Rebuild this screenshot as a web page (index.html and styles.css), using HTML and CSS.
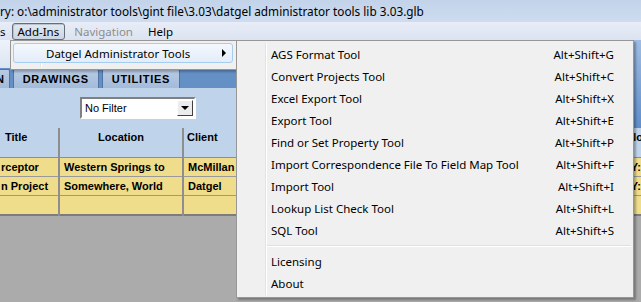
FILE: index.html
```html
<!DOCTYPE html>
<html lang="en">
<head>
  <meta charset="UTF-8" />
  <title>gINT - Add-Ins menu</title>
  <link rel="stylesheet" href="styles.css">
</head>
<body>

  <div class="titlebar">ry: o:\administrator tools\gint file\3.03\datgel administrator tools lib 3.03.glb</div>

  <div class="menubar">
    <span class="menu-item cut">s</span>
    <span class="menu-item pressed">Add-Ins</span>
    <span class="menu-item disabled">Navigation</span>
    <span class="menu-item help">Help</span>
  </div>

  <div class="upper">
    <div class="upper-main">
      <div class="toolbar"></div>
      <div class="tabs">
        <div class="tab tab-cut">N</div>
        <div class="tab">DRAWINGS</div>
        <div class="tab">UTILITIES</div>
      </div>
      <div class="filter">
        <div class="combo">
          <span class="combo-text">No Filter</span>
          <span class="combo-btn"></span>
        </div>
      </div>
    </div>
    <div class="upper-side"></div>
  </div>

  <table class="grid">
    <tr>
      <th class="col-title">Title</th>
      <th class="col-location">Location</th>
      <th class="col-client">Client</th>
      <th class="col-rest">No</th>
    </tr>
    <tr>
      <td>rceptor</td>
      <td>Western Springs to</td>
      <td>McMillan</td>
      <td class="last">Y:</td>
    </tr>
    <tr>
      <td>n Project</td>
      <td>Somewhere, World</td>
      <td>Datgel</td>
      <td class="last">Y:</td>
    </tr>
    <tr>
      <td></td>
      <td></td>
      <td></td>
      <td></td>
    </tr>
  </table>

  <!-- Add-Ins dropdown -->
  <div class="dropdown">
    <div class="dropdown-item active">
      <span>Datgel Administrator Tools</span>
      <span class="arrow"></span>
    </div>
  </div>

  <!-- Datgel Administrator Tools submenu -->
  <div class="submenu">
    <div class="sub-item"><span>AGS Format Tool</span><span class="key">Alt+Shift+G</span></div>
    <div class="sub-item"><span>Convert Projects Tool</span><span class="key">Alt+Shift+C</span></div>
    <div class="sub-item"><span>Excel Export Tool</span><span class="key">Alt+Shift+X</span></div>
    <div class="sub-item"><span>Export Tool</span><span class="key">Alt+Shift+E</span></div>
    <div class="sub-item"><span>Find or Set Property Tool</span><span class="key">Alt+Shift+P</span></div>
    <div class="sub-item"><span>Import Correspondence File To Field Map Tool</span><span class="key">Alt+Shift+F</span></div>
    <div class="sub-item"><span>Import Tool</span><span class="key">Alt+Shift+I</span></div>
    <div class="sub-item"><span>Lookup List Check Tool</span><span class="key">Alt+Shift+L</span></div>
    <div class="sub-item"><span>SQL Tool</span><span class="key">Alt+Shift+S</span></div>
    <div class="separator"></div>
    <div class="sub-item"><span>Licensing</span></div>
    <div class="sub-item"><span>About</span></div>
  </div>

</body>
</html>
```

FILE: styles.css
```css
body {
  margin: 0;
  width: 641px;
  height: 302px;
  overflow: hidden;
  position: relative;
  background-color: #ababab;
  font-family: "Noto Sans", "Open Sans", sans-serif;
  font-size: 11.5px;
  color: #000;
}

.titlebar {
  height: 22px;
  line-height: 22px;
  font-size: 11.8px;
  background: linear-gradient(#c2d3ea, #cddcef);
  white-space: nowrap;
  overflow: hidden;
}

.menubar {
  height: 18px;
  display: flex;
  align-items: center;
  background: linear-gradient(#e8edf7, #dbe3f1);
  white-space: nowrap;
}

.menu-item {
  line-height: 15px;
}

.menu-item.pressed {
  margin-left: 6px;
  padding: 0 5px;
  border: 1px solid #646d79;
  border-radius: 3px;
  background: linear-gradient(#e3e9f1, #cbd6e4);
  box-shadow: inset 1px 1px 0 #b9c4d2;
}

.menu-item.disabled {
  color: #8d8d8d;
  margin-left: 9px;
}

.menu-item.help {
  margin-left: 15px;
}

/* background window parts */
.upper {
  display: flex;
}

.upper-main {
  flex: 1;
}

.upper-side {
  width: 8px;
  background: linear-gradient(#9fbde3, #5f8ecb);
}

.toolbar {
  height: 28px;
  background: linear-gradient(#eef3fa, #dbe5f2);
}

.tabs {
  height: 20px;
  display: flex;
  align-items: flex-end;
  gap: 3px;
  background-color: #6590c6;
}

.tab {
  height: 18px;
  line-height: 18px;
  padding: 0 9px;
  font-family: "Liberation Sans", Arial, sans-serif;
  font-weight: bold;
  font-size: 11px;
  letter-spacing: 0.7px;
  background: linear-gradient(#b8cbe3, #a3bbda);
  border: 1px solid #5174a4;
  border-bottom: none;
  border-radius: 2px 2px 0 0;
}

.tab-cut {
  margin-left: -14px;
  padding-right: 4px;
}

.filter {
  height: 40px;
  background-color: #bfd3ea;
  display: flex;
  align-items: center;
  padding-left: 80px;
}

.combo {
  width: 112px;
  height: 18px;
  display: flex;
  align-items: center;
  justify-content: space-between;
  background-color: #fff;
  border: 2px solid;
  border-color: #808080 #fff #fff #808080;
  font-family: "Liberation Sans", Arial, sans-serif;
  font-size: 11px;
}

.combo-text {
  padding-left: 3px;
}

.combo-btn {
  width: 16px;
  height: 16px;
  margin-right: 1px;
  box-sizing: border-box;
  background-color: #ececec;
  border: 1px solid;
  border-color: #fff #404040 #404040 #fff;
  position: relative;
}

.combo-btn::after {
  content: "";
  position: absolute;
  left: 3px;
  top: 5px;
  border-left: 4px solid transparent;
  border-right: 4px solid transparent;
  border-top: 4px solid #000;
}

.grid {
  border-collapse: collapse;
  width: 658px;
  table-layout: fixed;
  font-family: "Liberation Sans", Arial, sans-serif;
  font-weight: bold;
  font-size: 11px;
  border-bottom: 2px solid #7c7c7c;
}

.grid th {
  height: 26px;
  background-color: #bfd4ea;
  vertical-align: top;
  padding: 3px 0 0;
  text-align: center;
  border-right: 2px solid #8e8e8e;
  border-bottom: 1px solid #8e8e8e;
}

.grid td {
  height: 18px;
  padding: 0 0 0 4px;
  background-color: #efdd8b;
  border-right: 2px solid #8e8e8e;
  border-bottom: 1px solid #999;
  white-space: nowrap;
  overflow: hidden;
}

.grid tr td:first-child {
  padding-left: 1px;
}

.grid .col-title {
  width: 59px;
  text-align: left;
  padding-left: 5px;
  box-sizing: border-box;
}

.grid .col-location {
  width: 122px;
}

.grid .col-client {
  width: 100px;
  text-align: left;
  padding-left: 3px;
}

.grid .col-rest {
  text-align: right;
  padding-right: 13px;
}

.grid td.last {
  text-align: right;
  padding-right: 15px;
}

/* popup menus */
.dropdown {
  position: absolute;
  left: 10px;
  top: 40px;
  width: 224px;
  height: 26px;
  background-color: #f0f0f0;
  border: 1px solid #979797;
  box-shadow: 2px 2px 2px rgba(0, 0, 0, 0.25);
  padding: 2px 0 0 2px;
}

.dropdown::before {
  content: "";
  position: absolute;
  left: 29px;
  top: 2px;
  bottom: 2px;
  width: 1px;
  background-color: #e2e3e3;
  box-shadow: 1px 0 0 #fff;
}

.dropdown-item {
  height: 20px;
  width: 220px;
  display: flex;
  align-items: center;
  justify-content: space-between;
  padding-left: 32px;
  padding-right: 6px;
  box-sizing: border-box;
  position: relative;
  border-radius: 3px;
}

.dropdown-item.active {
  border: 1px solid #a4cdf0;
  background: linear-gradient(#f4f8fd, #e3edf9);
}

.arrow {
  width: 0;
  height: 0;
  border-top: 4px solid transparent;
  border-bottom: 4px solid transparent;
  border-left: 4px solid #000;
}

.submenu {
  position: absolute;
  left: 236px;
  top: 40px;
  width: 396px;
  height: 254px;
  padding: 2px 0 0;
  background-color: #f0f0f0;
  border: 1px solid #979797;
  box-shadow: 2px 2px 2px rgba(0, 0, 0, 0.3);
}

.submenu::before {
  content: "";
  position: absolute;
  left: 28px;
  top: 2px;
  bottom: 2px;
  width: 1px;
  background-color: #e2e3e3;
  box-shadow: 1px 0 0 #fff;
}

.sub-item {
  height: 22px;
  display: flex;
  align-items: center;
  justify-content: space-between;
  padding: 0 19px 0 34px;
  white-space: nowrap;
}

.key {
  text-align: right;
}

.separator {
  height: 1px;
  margin: 4px 2px 3px 30px;
  background-color: #e0e0e0;
  border-bottom: 1px solid #fff;
}
```
